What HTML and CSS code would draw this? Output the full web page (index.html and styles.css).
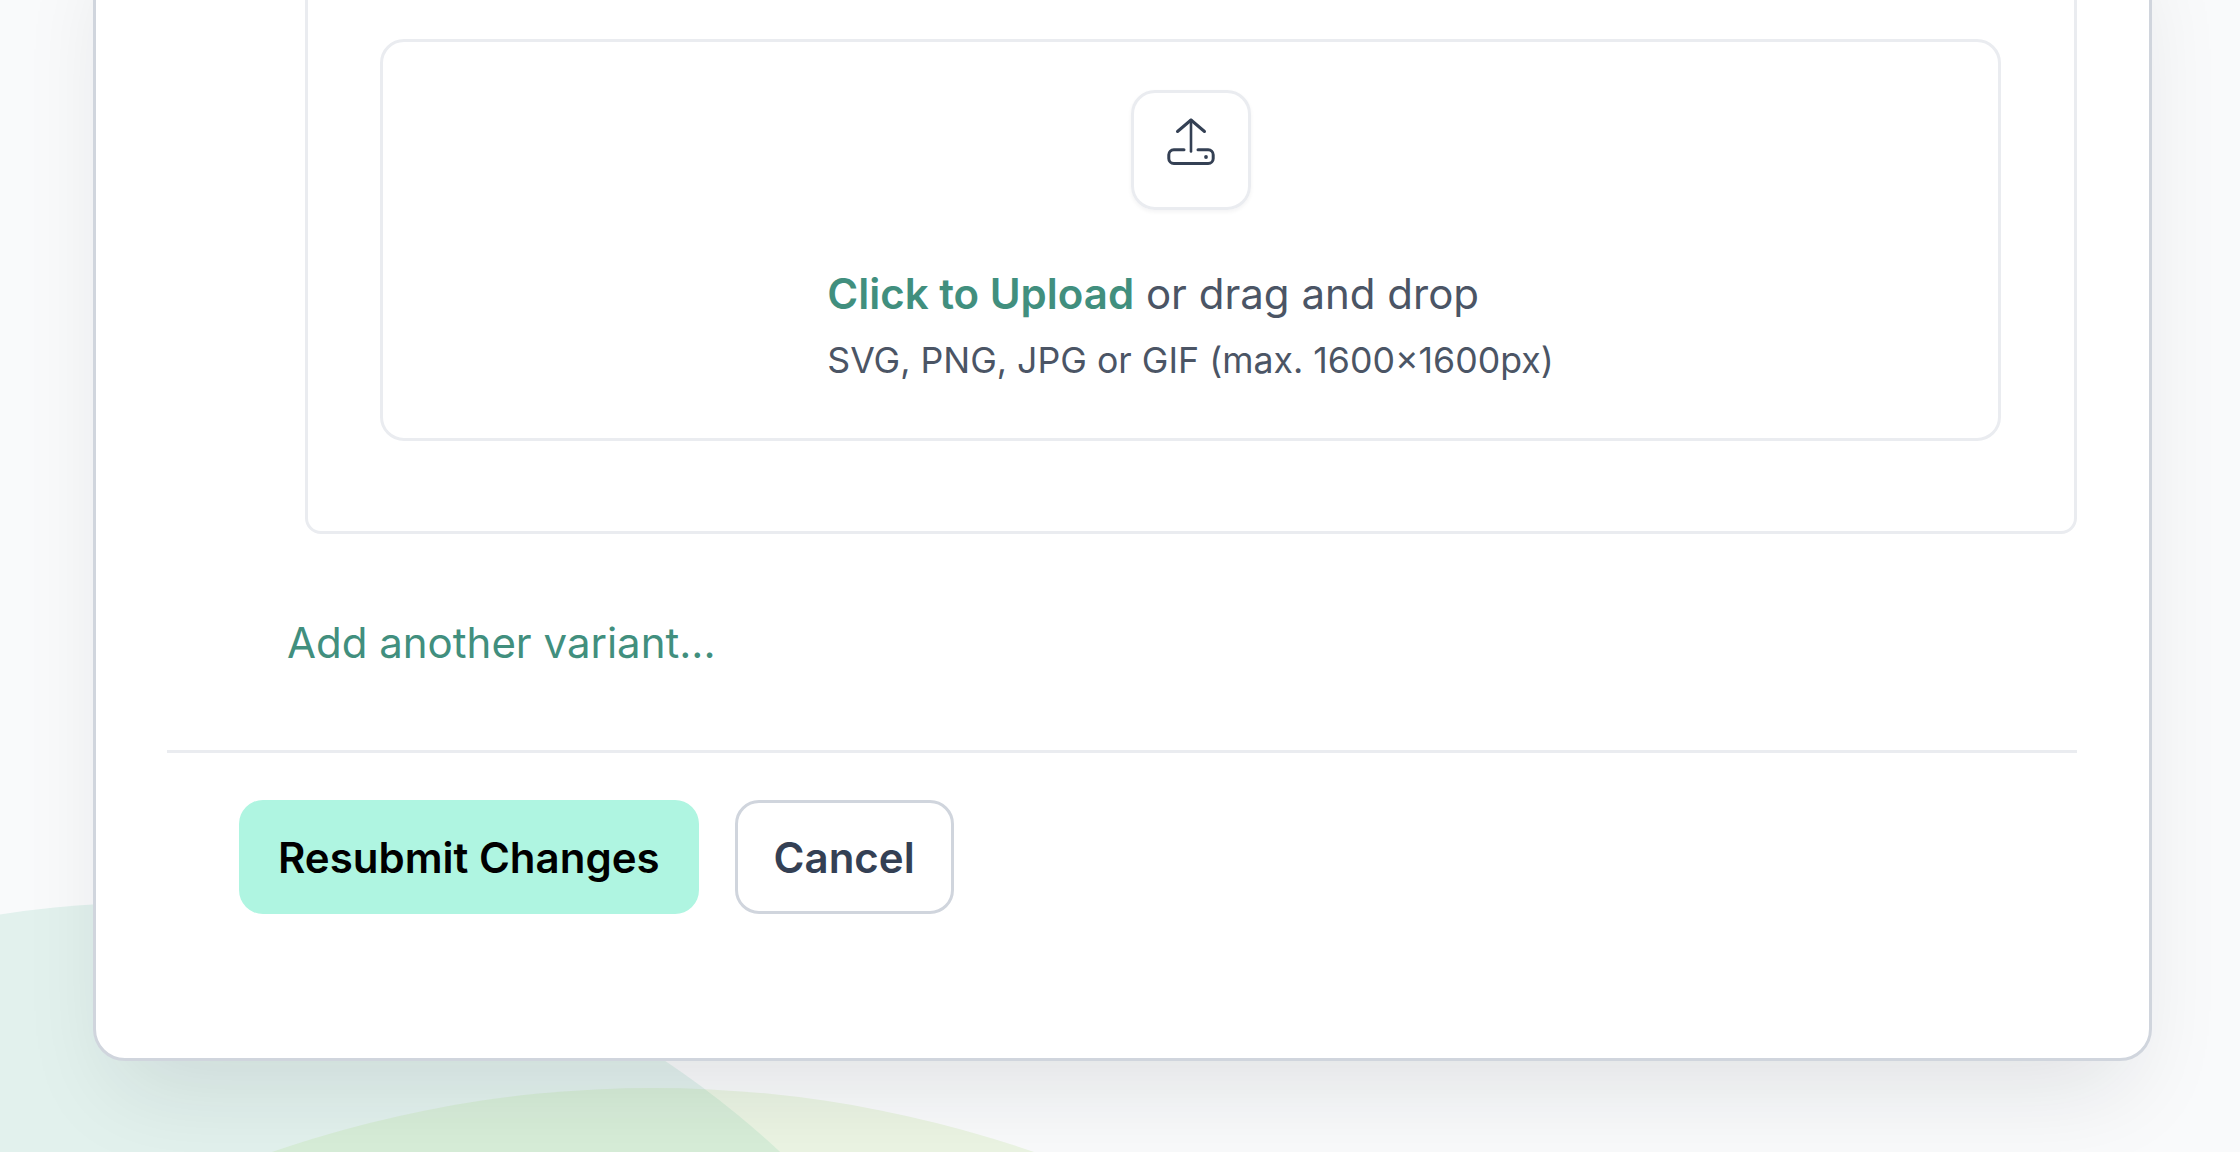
FILE: index.html
```html
<!DOCTYPE html>
<html lang="en">

<head>
  <meta charset="UTF-8" />
  <meta name="viewport" content="width=device-width, initial-scale=1.0" />
  <title>Resubmit Changes</title>
  <link rel="stylesheet" href="styles.css">
</head>

<body>
  <div class="backdrop">
    <div class="blob blob-teal"></div>
    <div class="blob blob-green"></div>
  </div>

  <main class="page">
    <section class="card">
      <div class="variant-panel">
        <div class="upload-box">
          <div class="upload-icon">
            <svg width="64" height="64" viewBox="0 0 64 64" fill="none" stroke="#344054" stroke-linecap="round" stroke-linejoin="round">
              <path d="M18.5 13.5L32 2L45.5 13.5" stroke-width="3" />
              <path d="M32 2V33.5" stroke-width="2.6" />
              <path d="M25 31.8H14.8a5 5 0 0 0-5 5v3.7a5 5 0 0 0 5 5H49.2a5 5 0 0 0 5-5v-3.7a5 5 0 0 0-5-5H39" stroke-width="3" />
              <circle cx="47" cy="39" r="1.9" fill="#344054" stroke="none" />
            </svg>
          </div>
          <div class="upload-text">
            <p class="upload-line"><a class="upload-link" href="#">Click to Upload</a> or drag and drop</p>
            <p class="upload-hint">SVG, PNG, JPG or GIF (max. 1600×1600px)</p>
          </div>
        </div>
      </div>

      <a class="add-variant" href="#">Add another variant...</a>

      <div class="actions">
        <button class="btn btn-primary">Resubmit Changes</button>
        <button class="btn btn-secondary">Cancel</button>
      </div>
    </section>
  </main>
</body>

</html>
```

FILE: styles.css
```css
* {
  margin: 0;
  padding: 0;
  box-sizing: border-box;
}

html,
body {
  height: 100%;
  overflow: hidden;
  font-family: Inter, 'Liberation Sans', sans-serif;
  background-color: #f9fafb;
}

.backdrop {
  position: absolute;
  inset: 0;
  overflow: hidden;
}

.blob {
  position: absolute;
  border-radius: 50%;
}

.blob-teal {
  left: -786px;
  top: 903px;
  width: 1864px;
  height: 1864px;
  background-color: rgba(96, 197, 164, 0.15);
}

.blob-green {
  left: -513px;
  top: 1088px;
  width: 2332px;
  height: 2332px;
  background-color: rgba(164, 215, 106, 0.16);
}

.page {
  position: relative;
  height: 100%;
  display: flex;
  flex-direction: column;
  justify-content: flex-end;
  padding: 0 88px 91px 93px;
}

.card {
  flex-shrink: 0;
  padding: 40px 72px 144px 71px;
  background-color: #ffffff;
  border: 3px solid #d0d5dd;
  border-radius: 32px;
  box-shadow: 0 48px 96px -24px rgba(16, 24, 40, 0.11);
}

.variant-panel {
  margin-left: 138px;
  padding: 90px 73px 90px 72px;
  border: 3px solid #eaecf0;
  border-radius: 16px;
}

.upload-box {
  display: flex;
  flex-direction: column;
  align-items: center;
  padding: 48px 0 51px;
  border: 3px solid #eaecf0;
  border-radius: 24px;
}

.upload-icon {
  width: 120px;
  height: 120px;
  display: flex;
  align-items: center;
  justify-content: center;
  border: 3px solid #eaecf0;
  border-radius: 24px;
  box-shadow: 0 2px 4px rgba(16, 24, 40, 0.05);
}

.upload-text {
  margin-top: 54px;
}

.upload-line {
  font-size: 42px;
  line-height: 60px;
  color: #4b5565;
}

.upload-link {
  color: #418f7e;
  font-weight: 600;
  text-decoration: none;
}

.upload-hint {
  margin-top: 9px;
  font-size: 35.7px;
  line-height: 54px;
  color: #4b5565;
}

.add-variant {
  display: block;
  margin-top: 79px;
  padding-left: 120px;
  font-size: 42px;
  line-height: 60px;
  color: #418f7e;
  text-decoration: none;
}

.actions {
  display: flex;
  gap: 36px;
  margin-top: 77px;
  padding: 47px 0 0 72px;
  border-top: 3px solid #eaecf0;
}

.btn {
  height: 114px;
  font-family: inherit;
  font-size: 42px;
  font-weight: 600;
  border-radius: 24px;
  cursor: pointer;
}

.btn-primary {
  padding: 0 39px;
  background-color: #aff5e1;
  color: #000000;
  border: none;
}

.btn-secondary {
  padding: 0 36px;
  background-color: #ffffff;
  color: #344054;
  border: 3px solid #d0d5dd;
}
```
